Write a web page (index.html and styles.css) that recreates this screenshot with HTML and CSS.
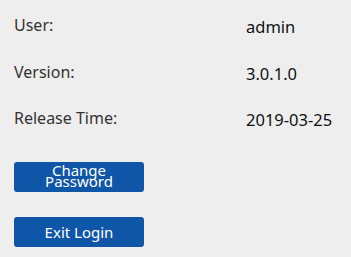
FILE: index.html
```html
<!DOCTYPE html>
<html>
<head>
<meta charset="utf-8">
<link rel="stylesheet" href="styles.css">
</head>
<body>
<div class="panel">
  <div class="info">
    <div class="label">User:</div><div class="value">admin</div>
    <div class="label">Version:</div><div class="value">3.0.1.0</div>
    <div class="label">Release Time:</div><div class="value">2019-03-25</div>
  </div>
  <div class="actions">
    <button class="btn btn-two">Change<br>Password</button>
    <button class="btn">Exit Login</button>
  </div>
</div>
</body>
</html>
```
FILE: styles.css
```css
html, body {
  margin: 0;
  padding: 0;
  background: #eeeeee;
  width: 351px;
  height: 257px;
  overflow: hidden;
}
.panel {
  padding: 15px 0 0 14px;
  font-family: "Noto Sans", "Liberation Sans", sans-serif;
  color: #222;
}
.info {
  display: grid;
  grid-template-columns: 232px auto;
  grid-auto-rows: 46.5px;
}
.label {
  font-size: 16px;
  line-height: 20px;
  color: #333;
}
.value {
  font-size: 16.5px;
  line-height: 20px;
  padding-top: 2px;
  color: #111;
}
.actions {
  display: flex;
  flex-direction: column;
  gap: 25px;
  margin-top: 7px;
}
.btn {
  width: 130px;
  height: 30px;
  border: none;
  border-radius: 3px;
  background: #0f56a8;
  color: #fff;
  font-family: "Noto Sans", "Liberation Sans", sans-serif;
  font-size: 15px;
  line-height: 18px;
  padding: 0;
  display: flex;
  align-items: center;
  justify-content: center;
  text-align: center;
}
.btn-two {
  line-height: 11.5px;
  padding-bottom: 1px;
}
```
